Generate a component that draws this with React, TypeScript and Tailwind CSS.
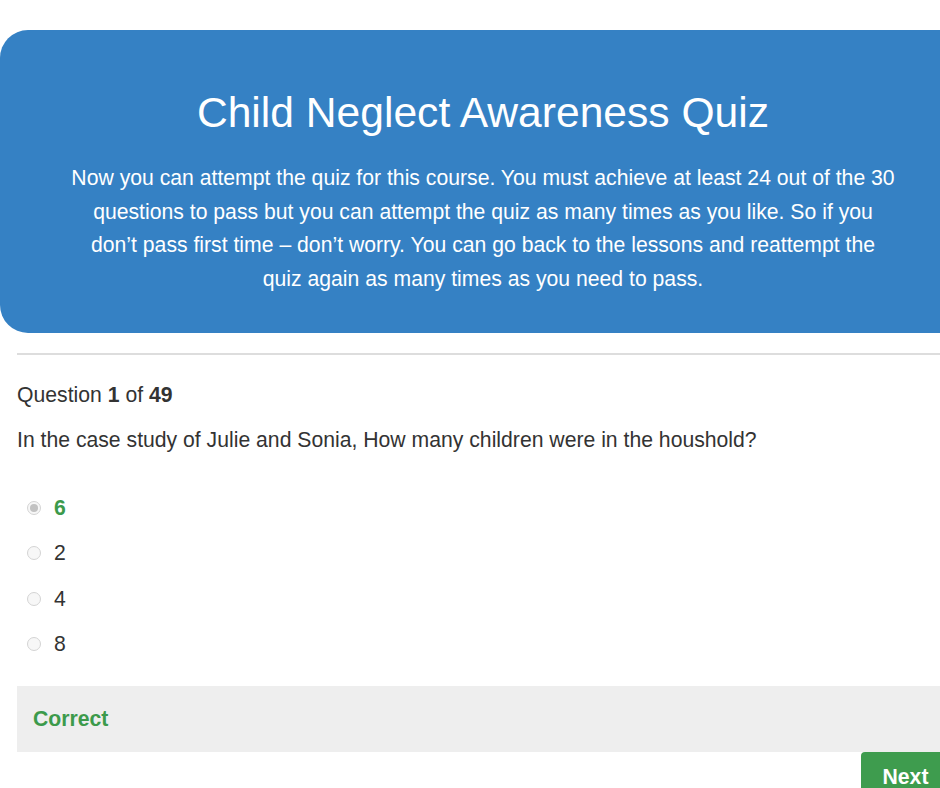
import React from "react";

const options = [
  { label: "6", picked: true },
  { label: "2", picked: false },
  { label: "4", picked: false },
  { label: "8", picked: false },
];

function Radio({ picked }: { picked: boolean }) {
  return (
    <span className="flex h-[14px] w-[14px] items-center justify-center rounded-full border border-[#d4d4d4] bg-[#f7f7f7]">
      {picked && <span className="h-[8px] w-[8px] rounded-full bg-[#c2c2c2]" />}
    </span>
  );
}

export default function App() {
  return (
    <div className="h-[788px] w-[940px] overflow-hidden bg-white font-['Liberation_Sans',Arial,sans-serif] text-[#333]">
      <div className="w-[966px] pt-[30px]">
        {/* intro banner */}
        <div className="flex h-[303px] flex-col items-center rounded-[28px] bg-[#3581c4] px-[70px] pt-[59px] text-center text-white">
          <h1 className="text-[42.6px] leading-[46px]">Child Neglect Awareness Quiz</h1>
          <p className="mt-[26px] text-[21.2px] leading-[33.7px]">
            Now you can attempt the quiz for this course. You must achieve at least 24 out of the 30
            questions to pass but you can attempt the quiz as many times as you like. So if you
            don’t pass first time – don’t worry. You can go back to the lessons and reattempt the
            quiz again as many times as you need to pass.
          </p>
        </div>

        <div className="ml-[17px] mr-[16px]">
          <div className="mt-[20px] h-[2px] bg-[#dddddd]" />

          <div className="mt-[28px] text-[21.2px] leading-[24px]">
            Question <b>1</b> of <b>49</b>
          </div>
          <div className="mt-[21px] text-[21.2px] leading-[24px]">
            In the case study of Julie and Sonia, How many children were in the houshold?
          </div>

          <ul className="mt-[33px] flex flex-col">
            {options.map((o) => (
              <li key={o.label} className="flex h-[45.5px] items-center gap-[13px] pl-[10px]">
                <Radio picked={o.picked} />
                <span
                  className={
                    o.picked
                      ? "text-[21.2px] font-bold text-[#3c9a4b]"
                      : "text-[21.2px] text-[#333]"
                  }
                >
                  {o.label}
                </span>
              </li>
            ))}
          </ul>

          <div className="mt-[19px] flex h-[66px] items-center bg-[#eeeeee] px-[16px]">
            <span className="text-[21.2px] font-bold text-[#3c9a4b]">Correct</span>
          </div>

          <div className="flex justify-end">
            <button className="h-[48px] w-[89px] rounded-[4px] bg-[#3e9c4e] pt-[2px] text-[21.2px] font-bold text-white">
              Next
            </button>
          </div>
        </div>
      </div>
    </div>
  );
}
